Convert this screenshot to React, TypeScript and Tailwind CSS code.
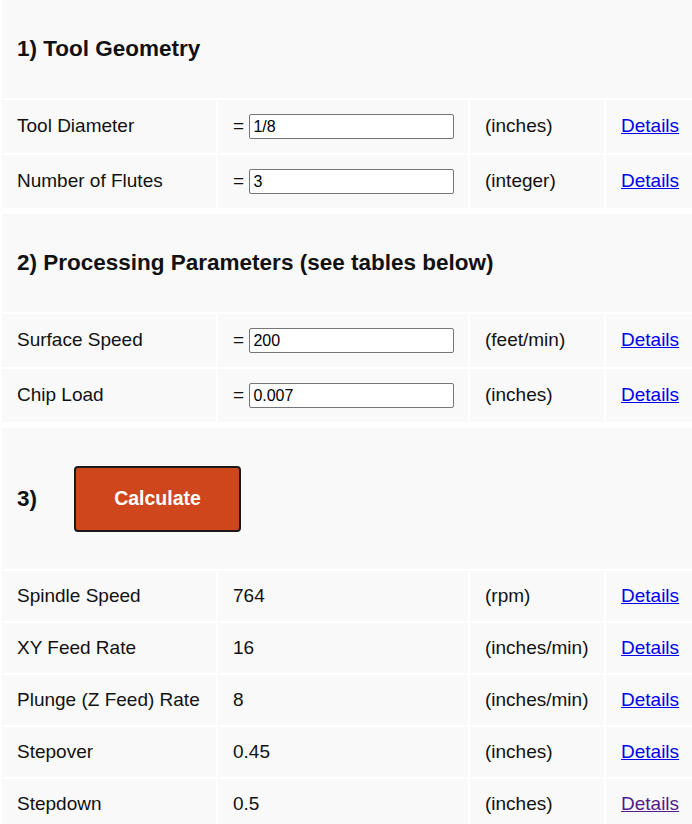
import React from "react";

const cell = "bg-[#f9f9f9] flex items-center pl-[15px]";

function InputRow({ label, value, unit }: { label: string; value: string; unit: string }) {
  return (
    <>
      <div className={`${cell} h-[53px]`}>{label}</div>
      <div className={`${cell} h-[53px]`}>
        <span className="whitespace-pre">= </span>
        <input
          readOnly
          defaultValue={value}
          className="w-[205px] h-[25px] border border-[#767676] rounded-[2px] bg-white px-[3px] text-[16px] text-black outline-none"
        />
      </div>
      <div className={`${cell} h-[53px]`}>{unit}</div>
      <div className={`${cell} h-[53px]`}>
        <a href="#" className="text-[#0000ee] underline">Details</a>
      </div>
    </>
  );
}

function ResultRow({ label, value, unit, visited }: { label: string; value: string; unit: string; visited?: boolean }) {
  return (
    <>
      <div className={`${cell} h-[50px]`}>{label}</div>
      <div className={`${cell} h-[50px]`}>{value}</div>
      <div className={`${cell} h-[50px]`}>{unit}</div>
      <div className={`${cell} h-[50px]`}>
        <a href="#" className={visited ? "text-[#551a8b] underline" : "text-[#0000ee] underline"}>Details</a>
      </div>
    </>
  );
}

export default function App() {
  return (
    <div className="bg-white min-h-screen pl-[2px] font-['Liberation_Sans',Arial,sans-serif] text-[19px] text-[#111] overflow-hidden">
      <div className="flex flex-col gap-[6px] w-[690px]">
        <div className="grid grid-cols-[214px_250px_134px_86px] gap-[2px]">
          <div className={`${cell} col-span-4 h-[98px]`}>
            <h3 className="text-[22.5px] font-bold">1) Tool Geometry</h3>
          </div>
          <InputRow label="Tool Diameter" value="1/8" unit="(inches)" />
          <InputRow label="Number of Flutes" value="3" unit="(integer)" />
        </div>
        <div className="grid grid-cols-[214px_250px_134px_86px] gap-[2px]">
          <div className={`${cell} col-span-4 h-[98px]`}>
            <h3 className="text-[22.5px] font-bold">2) Processing Parameters (see tables below)</h3>
          </div>
          <InputRow label="Surface Speed" value="200" unit="(feet/min)" />
          <InputRow label="Chip Load" value="0.007" unit="(inches)" />
        </div>
        <div className="grid grid-cols-[214px_250px_134px_86px] gap-[2px]">
          <div className={`${cell} col-span-4 h-[141px]`}>
            <h3 className="text-[22.5px] font-bold">3)</h3>
            <button className="ml-[37px] w-[167px] h-[66px] bg-[#d0461c] border-2 border-[#1a1a1a] rounded-[4px] text-white font-bold text-[19.5px]">
              Calculate
            </button>
          </div>
          <ResultRow label="Spindle Speed" value="764" unit="(rpm)" />
          <ResultRow label="XY Feed Rate" value="16" unit="(inches/min)" />
          <ResultRow label="Plunge (Z Feed) Rate" value="8" unit="(inches/min)" />
          <ResultRow label="Stepover" value="0.45" unit="(inches)" />
          <ResultRow label="Stepdown" value="0.5" unit="(inches)" visited />
        </div>
      </div>
    </div>
  );
}
